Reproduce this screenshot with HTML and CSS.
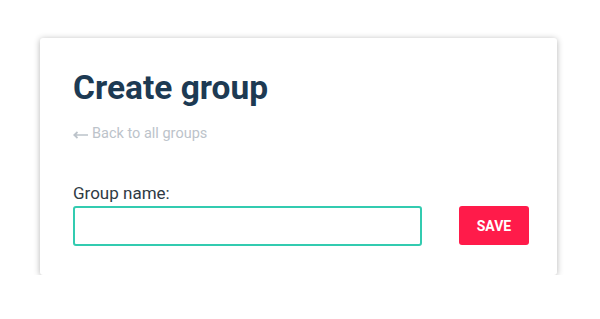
FILE: index.html
```html
<!DOCTYPE html>
<html lang="en">
<head>
<meta charset="utf-8">
<title>Create group</title>
<link rel="stylesheet" href="styles.css">
</head>
<body>
<div class="card">
  <h1 class="title">Create group</h1>
  <a class="back" href="#"><svg class="arrow" width="15" height="8" viewBox="0 0 15 8" aria-hidden="true"><path d="M15 4H2M4.5 1L1.2 4L4.5 7" fill="none" stroke="currentColor" stroke-width="1.7"/></svg>Back to all groups</a>
  <form class="form-row">
    <div class="field">
      <label class="label" for="gname">Group name:</label>
      <input class="input" id="gname" type="text">
    </div>
    <button class="save" type="button">SAVE</button>
  </form>
</div>
</body>
</html>
```
FILE: styles.css
```css
html, body {
  margin: 0;
  padding: 0;
  background: #ffffff;
}
body {
  font-family: Roboto, "Liberation Sans", sans-serif;
  padding: 38px 43px 0 40px;
}
.card {
  width: 517px;
  height: 237px;
  box-sizing: border-box;
  padding: 30px 28px 29px 33px;
  background: #fff;
  border-radius: 3px;
  box-shadow: 0 1px 6px rgba(0, 0, 0, 0.3);
  display: flex;
  flex-direction: column;
  align-items: flex-start;
}
.title {
  margin: 0;
  font-size: 33.5px;
  line-height: 40px;
  font-weight: 700;
  color: #1d3a53;
}
.back {
  margin-top: 16px;
  font-size: 14.5px;
  line-height: 20px;
  color: #bcc3ca;
  text-decoration: none;
  display: flex;
  align-items: center;
}
.arrow {
  margin-right: 4px;
  margin-top: 1px;
}
.form-row {
  margin: 39px 0 0 0;
  align-self: stretch;
  display: flex;
  align-items: flex-end;
  gap: 37px;
}
.field {
  flex: 1;
  display: flex;
  flex-direction: column;
}
.label {
  font-size: 17px;
  line-height: 20px;
  color: #2e3a44;
  margin-bottom: 3px;
}
.input {
  height: 40px;
  box-sizing: border-box;
  border: 2px solid #33cbb0;
  border-radius: 3px;
  margin: 0;
  padding: 0 10px;
  font: inherit;
  outline: none;
}
.save {
  width: 70px;
  height: 39px;
  margin-bottom: 1px;
  border: none;
  border-radius: 3px;
  background: #ff1b4a;
  color: #fff;
  font-family: Roboto, "Liberation Sans", sans-serif;
  font-weight: 700;
  font-size: 14px;
  padding: 0;
}
```
